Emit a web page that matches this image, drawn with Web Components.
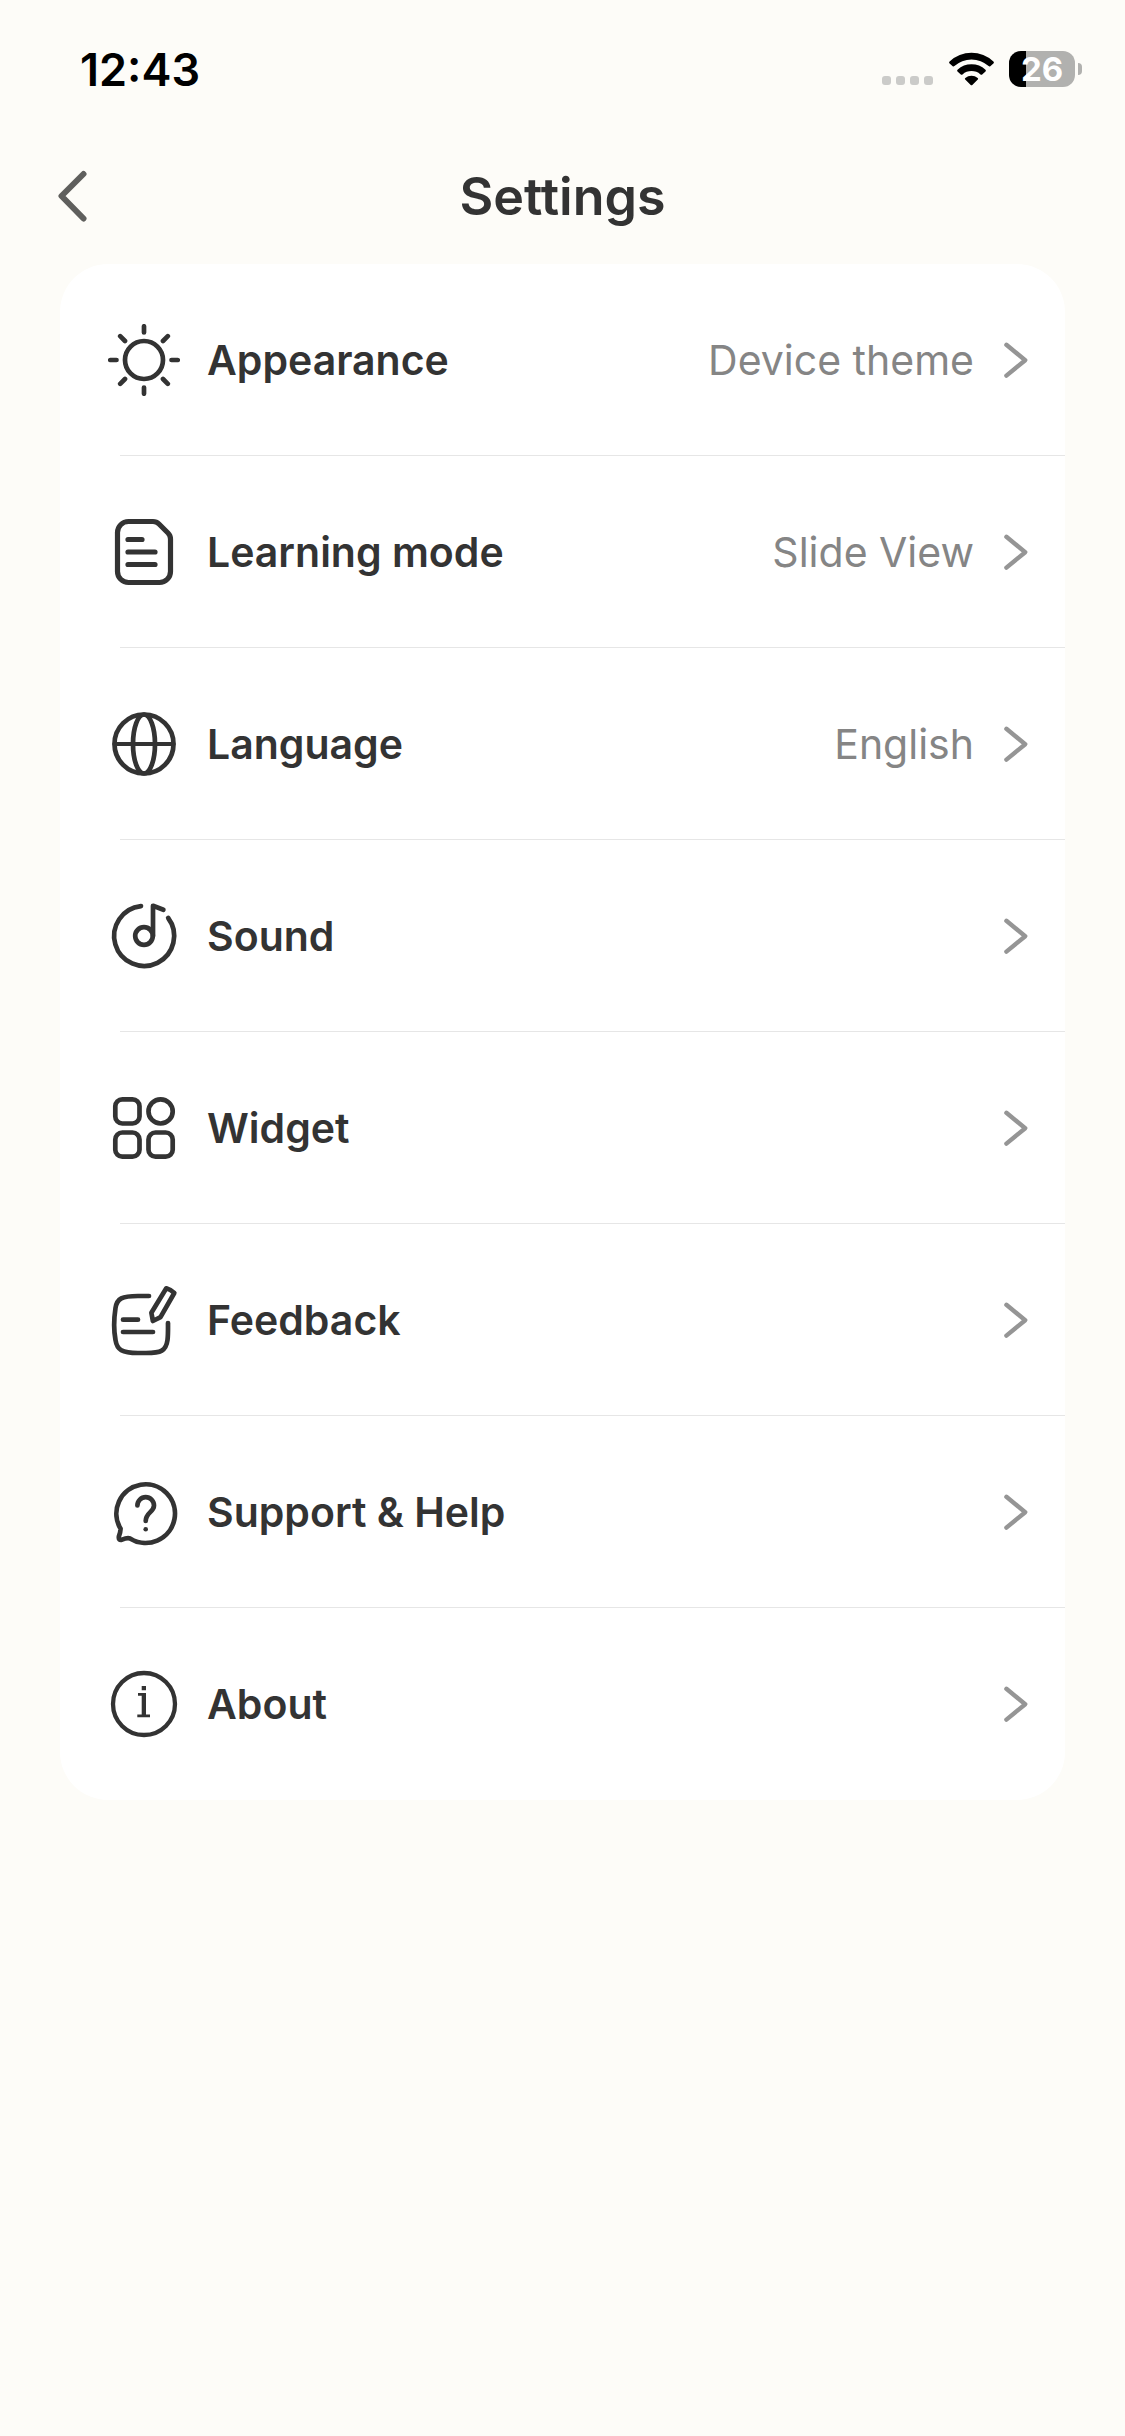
<!DOCTYPE html>
<html lang="en">
<head>
<meta charset="utf-8">
<meta name="viewport" content="width=device-width, initial-scale=1">
<title>Settings</title>
<style>
  body {
    margin: 0;
    min-height: 100vh;
    background: #fdfcf8;
    color: #333;
    font-family: Inter, "Liberation Sans", sans-serif;
  }
</style>
</head>
<body>
<settings-page>
  <status-bar slot="status" time="12:43" battery="26"></status-bar>
  <nav-header slot="header">Settings</nav-header>
  <settings-row icon="sun">Appearance<span slot="value">Device theme</span></settings-row>
  <settings-row icon="document">Learning mode<span slot="value">Slide View</span></settings-row>
  <settings-row icon="globe">Language<span slot="value">English</span></settings-row>
  <settings-row icon="sound">Sound</settings-row>
  <settings-row icon="widget">Widget</settings-row>
  <settings-row icon="feedback">Feedback</settings-row>
  <settings-row icon="help">Support &amp; Help</settings-row>
  <settings-row icon="about">About</settings-row>
</settings-page>

<script>
// Line icons, all drawn on a 72x72 grid
const icons = {
  sun: `
    <circle cx="36" cy="36" r="19"/>
    <path d="M36 2.3v6.2M36 63.5v6.2M2.3 36h6.2M63.5 36h6.2M12.2 12.2l4.8 4.8M55 55l4.8 4.8M12.2 59.8l4.8-4.8M55 17l4.8-4.8"/>`,
  document: `
    <path stroke-width="5.2" d="M20.5 5.5H45Q48.5 5.5 51 8L60 17Q62.5 19.5 62.5 23V55.5a11 11 0 0 1-11 11h-31a11 11 0 0 1-11-11v-39a11 11 0 0 1 11-11z"/>
    <path stroke-width="5.2" d="M20 23.5h14M20 36h27M20 48.5h27"/>`,
  globe: `
    <circle cx="36" cy="36" r="29.5"/>
    <ellipse cx="36" cy="36" rx="11" ry="29.5"/>
    <path stroke-width="4.2" d="M6.5 36h59"/>`,
  sound: `
    <path d="M33 6.1A30 30 0 1 0 60.2 18"/>
    <circle cx="36" cy="36" r="8.8"/>
    <path d="M45 36V5.8l10.4 3.9"/>`,
  widget: `
    <rect x="7.3" y="7.3" width="24.2" height="24.2" rx="7"/>
    <circle cx="52.6" cy="19.4" r="12.1"/>
    <rect x="7.3" y="40.5" width="24.2" height="24.2" rx="7"/>
    <rect x="40.5" y="40.5" width="24.2" height="24.2" rx="7"/>`,
  feedback: `
    <path d="M41 12H30C14 12 9 14.5 7.5 24C6 34 6 48 7.5 56C9 66 14 69 30 69h8C53 69 58 67 59.5 56C60.2 50 60 44 60 39"/>
    <path d="M15 35.7h15M15 48h30"/>
    <path d="M58.3 4.3Q62.5 5.5 66.3 9L52.5 33.2L44.9 37L43.4 28.8Z"/>`,
  help: `
    <path d="M22 62.4A29.3 29.3 0 1 0 12.6 52.8Q12.5 56 10.9 60.4Q10.2 64.5 14 63.7Q19 61.5 22 62.4"/>
    <path d="M29.4 29.5a8.3 8.3 0 0 1 16.6 0C46 36 37.7 36.5 37.7 45"/>
    <circle cx="37.7" cy="53.2" r="2.3" fill="currentColor" stroke="none"/>`,
  about: `
    <circle cx="36" cy="36" r="31" stroke-width="4.3"/>
    <path stroke="none" fill="currentColor" d="M33.7 18H38v4.2H33.7zM30 25h8v21.4h4v2.8H29.3v-2.8h4.4V27.8H30z"/>`,
};

class SettingsPage extends HTMLElement {
  constructor() {
    super();
    this.attachShadow({ mode: "open" });
    this.shadowRoot.innerHTML = `
      <style>
        :host { display: flex; flex-direction: column; }
        main {
          margin: 10px 60px 60px;
          border-radius: 48px;
          background: #fff;
          overflow: hidden;
        }
      </style>
      <slot name="status"></slot>
      <slot name="header"></slot>
      <main><slot></slot></main>
    `;
  }
}

class StatusBar extends HTMLElement {
  constructor() {
    super();
    this.attachShadow({ mode: "open" });
  }

  connectedCallback() {
    const level = this.getAttribute("battery");
    this.shadowRoot.innerHTML = `
      <style>
        :host {
          display: flex;
          align-items: center;
          justify-content: space-between;
          height: 138px;
          padding: 0 43px 0 80px;
          color: #000;
          font-weight: 600;
        }
        .time { font-size: 45px; }
        .indicators { display: flex; align-items: center; }
        .signal { display: flex; gap: 5px; padding-top: 23px; margin-right: 15px; }
        .signal i { width: 9px; height: 9px; border-radius: 3px; background: #cbcbc9; }
        .wifi { width: 47px; height: 34px; margin-right: 14px; }
        .battery {
          width: 66px;
          height: 36px;
          border-radius: 12px;
          background: linear-gradient(to right, #000 ${level}%, #b1b1af ${level}%);
          color: #fff;
          font-size: 33px;
          font-weight: 700;
          line-height: 36px;
          text-align: center;
        }
        .nub { width: 4px; height: 12px; margin-left: 3px; border-radius: 0 4px 4px 0; background: #b1b1af; }
      </style>
      <span class="time">${this.getAttribute("time")}</span>
      <div class="indicators">
        <div class="signal"><i></i><i></i><i></i><i></i></div>
        <svg class="wifi" viewBox="0 0 47 34" aria-hidden="true">
          <path d="M1.6 9.4A32 32 0 0 1 45.4 9.4Q46.4 10.4 45.4 11.4L42.3 14.2Q41.5 14.9 40.6 14.1A25.5 25.5 0 0 0 6.4 14.1Q5.5 14.9 4.7 14.2L1.6 11.4Q.6 10.4 1.6 9.4z"/>
          <path d="M9.5 17.7A20.8 20.8 0 0 1 37.5 17.7Q38.4 18.6 37.5 19.5L34.2 22.5Q33.4 23.1 32.5 22.4A14 14 0 0 0 14.5 22.4Q13.6 23.1 12.8 22.5L9.5 19.5Q8.6 18.6 9.5 17.7z"/>
          <path d="M17.3 26A9.7 9.7 0 0 1 29.7 26Q30.6 26.8 29.8 27.6L24.3 32.9Q23.5 33.7 22.7 32.9L17.2 27.6Q16.4 26.8 17.3 26z"/>
        </svg>
        <div class="battery">${level}</div>
        <div class="nub"></div>
      </div>
    `;
  }
}

class NavHeader extends HTMLElement {
  constructor() {
    super();
    this.attachShadow({ mode: "open" });
    this.shadowRoot.innerHTML = `
      <style>
        :host {
          display: grid;
          grid-template-columns: 72px 1fr 72px;
          align-items: center;
          height: 116px;
          padding: 0 36px;
        }
        button {
          display: flex;
          align-items: center;
          justify-content: center;
          height: 72px;
          padding: 0;
          border: 0;
          background: none;
          color: #5f5f5d;
        }
        svg { width: 32px; height: 52px; }
        h1 { margin: 0; font-size: 52px; font-weight: 600; text-align: center; }
      </style>
      <button type="button" aria-label="Back">
        <svg viewBox="0 0 32 52" fill="none" stroke="currentColor" stroke-width="6" stroke-linecap="round" stroke-linejoin="round">
          <path d="M27.5 4L5.5 26l22 22.5"/>
        </svg>
      </button>
      <h1><slot></slot></h1>
    `;
  }
}

class SettingsRow extends HTMLElement {
  constructor() {
    super();
    this.attachShadow({ mode: "open" });
  }

  connectedCallback() {
    this.shadowRoot.innerHTML = `
      <style>
        :host { display: block; }
        button {
          display: flex;
          align-items: center;
          width: 100%;
          height: 191px;
          padding: 0 37px 0 48px;
          border: 0;
          background: none;
          color: inherit;
          font: inherit;
          font-size: 41px;
          text-align: left;
        }
        .icon { width: 72px; height: 72px; margin-right: 27px; }
        .label { flex: 1; font-weight: 600; }
        .value { color: #858585; }
        .chevron { width: 24px; height: 36px; margin-left: 30px; color: #959595; }
        .rule { height: 1px; margin-left: 60px; background: #e6e6e6; }
        :host(:last-of-type) .rule { background: none; }
      </style>
      <button type="button">
        <svg class="icon" viewBox="0 0 72 72" fill="none" stroke="currentColor" stroke-width="4.7" stroke-linecap="round" stroke-linejoin="round" aria-hidden="true">${icons[this.getAttribute("icon")]}</svg>
        <span class="label"><slot></slot></span>
        <span class="value"><slot name="value"></slot></span>
        <svg class="chevron" viewBox="0 0 24 36" fill="none" stroke="currentColor" stroke-width="4.4" stroke-linecap="round" stroke-linejoin="round" aria-hidden="true">
          <path d="M2.4 2.8L21.2 18.2 2.4 33.6"/>
        </svg>
      </button>
      <div class="rule"></div>
    `;
  }
}

customElements.define("settings-page", SettingsPage);
customElements.define("status-bar", StatusBar);
customElements.define("nav-header", NavHeader);
customElements.define("settings-row", SettingsRow);
</script>
</body>
</html>
